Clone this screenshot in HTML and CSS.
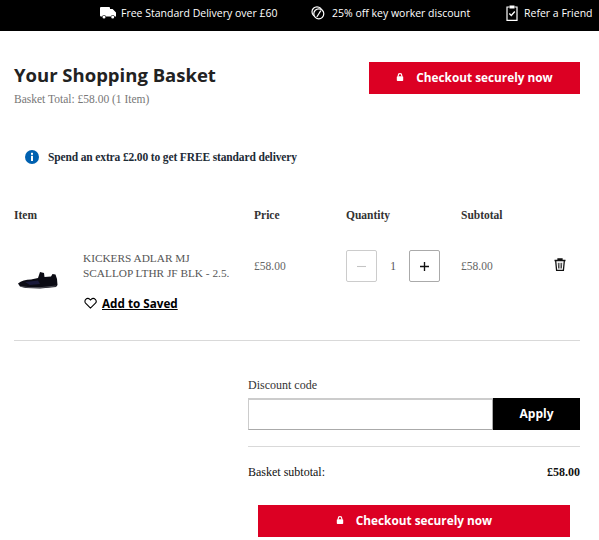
FILE: index.html
```html
<!DOCTYPE html>
<html lang="en">
<head>
<meta charset="utf-8">
<title>Your Shopping Basket</title>
<link rel="stylesheet" href="styles.css">
</head>
<body>
<div class="topbar">
  <div class="usp"><svg class="usp-truck" viewBox="0 0 16 12"><path d="M0 1a1 1 0 0 1 1-1h8a1 1 0 0 1 1 1v1h2.600L16 5.600V9.500h-1.300a2 2 0 0 0-3.900 0H6a2 2 0 0 0-3.900 0H1a1 1 0 0 1-1-1z" fill="#fff"/><circle cx="4" cy="10" r="1.500" fill="#fff"/><circle cx="12.700" cy="10" r="1.500" fill="#fff"/></svg>Free Standard Delivery over £60</div>
  <div class="usp"><svg class="usp-disc" viewBox="0 0 14 14"><circle cx="6" cy="5.800" r="5" fill="none" stroke="#fff" stroke-width="1.200"/><circle cx="7.800" cy="7.800" r="5" fill="#000" stroke="#fff" stroke-width="1.200"/><path d="M9.800 4.600 5.800 11" fill="none" stroke="#fff" stroke-width="1.200"/></svg>25% off key worker discount</div>
  <div class="usp"><svg class="usp-clip" viewBox="0 0 12 16"><path d="M3.500 2H1v13.300h10V2H8.500" fill="none" stroke="#fff" stroke-width="1.200"/><rect x="3.500" y="0.500" width="5" height="3" fill="#fff"/><path d="M3.300 8.500 5.300 10.500 8.800 6.500" fill="none" stroke="#fff" stroke-width="1.300"/></svg>Refer a Friend</div>
</div>

<main class="page">
  <header class="head">
    <div>
      <h1>Your Shopping Basket</h1>
      <p class="total">Basket Total: £58.00 (1 Item)</p>
    </div>
    <a class="btn btn-top"><svg class="lock" viewBox="0 0 10 10"><path d="M2.800 4.500V3a2.200 2.200 0 0 1 4.400 0v1.500" fill="none" stroke="#fff" stroke-width="1.500"/><rect x="1" y="4" width="8" height="6" rx="1" fill="#fff"/></svg>Checkout securely now</a>
  </header>

  <div class="notice"><svg class="info" viewBox="0 0 14 14"><circle cx="7" cy="7" r="7" fill="#0061b0"/><rect x="6" y="5.800" width="2" height="5.200" fill="#fff"/><rect x="6" y="2.800" width="2" height="2" fill="#fff"/></svg>Spend an extra £2.00 to get FREE standard delivery</div>

  <div class="row labels">
    <div class="c-item">Item</div>
    <div class="c-price">Price</div>
    <div class="c-qty">Quantity</div>
    <div class="c-sub">Subtotal</div>
  </div>

  <div class="row line">
    <div class="c-item item">
      <svg class="shoe" viewBox="0 0 40 18"><path d="M0 12.500C3 10 8 8.500 13 8.500L20 7 22 1 26 2 26.500 6 33 5.500 34.500 3 37.500 3.500 39 8 39.500 14 38 16 22 17.500 8 17 2 15.500z" fill="#0b0b14"/><path d="M7 11 20 9.500 22 13 12 14z" fill="#1a1a3a"/><path d="M3 15.500 10 16.500 24 16.500 38 15" stroke="#55555c" stroke-width=".9" fill="none"/></svg>
      <div class="item-text">
        <div class="name">KICKERS ADLAR MJ<br>SCALLOP LTHR JF BLK - 2.5.</div>
        <a class="save"><svg class="heart" viewBox="0 0 14 13"><path d="M7 12 1.900 7A3.100 3.100 0 0 1 6.300 2.500L7 3.200l.7-.7A3.100 3.100 0 0 1 12.100 7z" fill="none" stroke="#000" stroke-width="1.200"/></svg><span>Add to Saved</span></a>
      </div>
    </div>
    <div class="c-price val">£58.00</div>
    <div class="c-qty stepper">
      <span class="step off"><svg viewBox="0 0 10 10"><path d="M0 5h10" stroke="#c4c4c4" stroke-width="1.200"/></svg></span>
      <span class="count">1</span>
      <span class="step"><svg viewBox="0 0 10 10"><path d="M0 5h10M5 0v10" stroke="#111" stroke-width="1.500"/></svg></span>
    </div>
    <div class="c-sub val">£58.00</div>
    <svg class="trash" viewBox="0 0 12 13"><path d="M0.500 2.500h11M4 2.300V1h4v1.300" fill="none" stroke="#111" stroke-width="1.300"/><path d="M1.700 3 2.600 12.300H9.400L10.300 3" fill="none" stroke="#111" stroke-width="1.300"/><path d="M4.300 4.800 4.600 10.500M6 4.800v5.700M7.700 4.800 7.400 10.500" stroke="#111" stroke-width=".8"/></svg>
  </div>

  <section class="summary">
    <label class="code-label">Discount code</label>
    <div class="code">
      <div class="field"></div>
      <div class="apply">Apply</div>
    </div>
    <div class="sum-row"><span>Basket subtotal:</span><span class="sum-val">£58.00</span></div>
    <a class="btn btn-bottom"><svg class="lock" viewBox="0 0 10 10"><path d="M2.800 4.500V3a2.200 2.200 0 0 1 4.400 0v1.500" fill="none" stroke="#fff" stroke-width="1.500"/><rect x="1" y="4" width="8" height="6" rx="1" fill="#fff"/></svg>Checkout securely now</a>
  </section>
</main>
</body>
</html>
```
FILE: styles.css
```css
* { box-sizing: border-box; }
html, body { margin: 0; padding: 0; background: #fff; overflow: hidden; }
body { width: 599px; height: 540px; font-family: "Liberation Serif", serif; color: #222; }

.topbar {
  height: 31px;
  background: #000;
  color: #fff;
  font: 10.500px "Open Sans", sans-serif;
  display: flex;
  align-items: center;
  padding-left: 100px;
  padding-bottom: 5px;
  white-space: nowrap;
}
.usp { display: flex; align-items: center; }
.usp:nth-child(1) { width: 211px; }
.usp:nth-child(2) { width: 195px; }
.usp-truck { width: 16px; height: 12px; margin-right: 5px; }
.usp-disc { width: 14px; height: 14px; margin-right: 7px; }
.usp-clip { width: 12px; height: 16px; margin-right: 6px; }

.page { padding: 0 19px 0 14px; }

.head { display: flex; justify-content: space-between; align-items: flex-start; padding-top: 31px; height: 103px; }
h1 { margin: 0; font: 700 18.500px/26px "Open Sans", sans-serif; color: #222; }
.total { margin: 4px 0 0; font-size: 11.500px; line-height: 14px; color: #777; }

.btn {
  display: flex;
  align-items: center;
  justify-content: center;
  background: #dc0023;
  color: #fff;
  font: 700 11.800px "Open Sans", sans-serif;
  padding-bottom: 2px;
}
.btn-top { width: 211px; height: 32px; }
.btn-bottom { width: 312px; height: 32px; margin-left: 10px; }
.lock { width: 8px; height: 8px; margin-right: 12px; }

.notice {
  display: flex;
  align-items: center;
  margin: 13px 0 0 11px;
  height: 20px;
  font-size: 11.500px;
  letter-spacing: -0.14px;
  font-weight: 700;
  color: #1d2b36;
}
.info { width: 14px; height: 14px; margin-right: 9px; }

.row { position: relative; display: flex; }
.labels { margin-top: 40px; height: 16px; align-items: center; font-size: 11.500px; font-weight: 700; color: #333; }
.c-item { width: 240px; flex: none; }
.c-price { width: 92px; flex: none; }
.c-qty { width: 115px; flex: none; }
.c-sub { flex: none; }

.line { height: 99px; margin-top: 19px; border-bottom: 1px solid #d9d9d9; align-items: flex-start; }
.item { display: flex; align-items: flex-start; }
.shoe { width: 40px; height: 18px; margin: 29px 25px 0 4px; flex: none; }
.item-text { padding-top: 9px; }
.name { font-size: 11.300px; line-height: 15px; color: #555; white-space: nowrap; }
.save { display: flex; align-items: center; margin-top: 13px; margin-left: 1px; font: 700 11.700px/18px "Open Sans", sans-serif; color: #000; }
.save span { text-decoration: underline; }
.heart { width: 13px; height: 12px; margin-right: 5px; }
.val { font-size: 11.500px; color: #666; line-height: 14px; padding-top: 17px; }
.stepper { display: flex; align-items: center; height: 32px; margin-top: 8px; }
.step { width: 31px; height: 32px; border: 1px solid #aaa; border-radius: 2px; display: flex; align-items: center; justify-content: center; }
.step.off { border-color: #ccc; }
.step svg { width: 9px; height: 9px; }
.count { width: 32px; text-align: center; font-size: 11.500px; color: #555; }
.trash { position: absolute; left: 540px; top: 16px; width: 12px; height: 13px; }

.summary { margin-left: 234px; padding-top: 36px; }
.code-label { display: block; font-size: 12px; line-height: 16px; color: #333; font-weight: 400; }
.code { display: flex; height: 32px; margin-top: 5px; }
.field { flex: 1; border: 1px solid #aaa; border-top: 2px solid #ccc; border-left: 1px solid #ccc; }
.apply { width: 87px; background: #000; color: #fff; font: 700 12px/32px "Open Sans", sans-serif; text-align: center; }
.sum-row { display: flex; justify-content: space-between; margin-top: 16px; padding-top: 17px; border-top: 1px solid #d9d9d9; font-size: 12px; line-height: 16px; color: #111; font-weight: 400; }
.sum-val { font-weight: 700; }
.btn-bottom { margin-top: 25px; margin-left: 10px; }
```
